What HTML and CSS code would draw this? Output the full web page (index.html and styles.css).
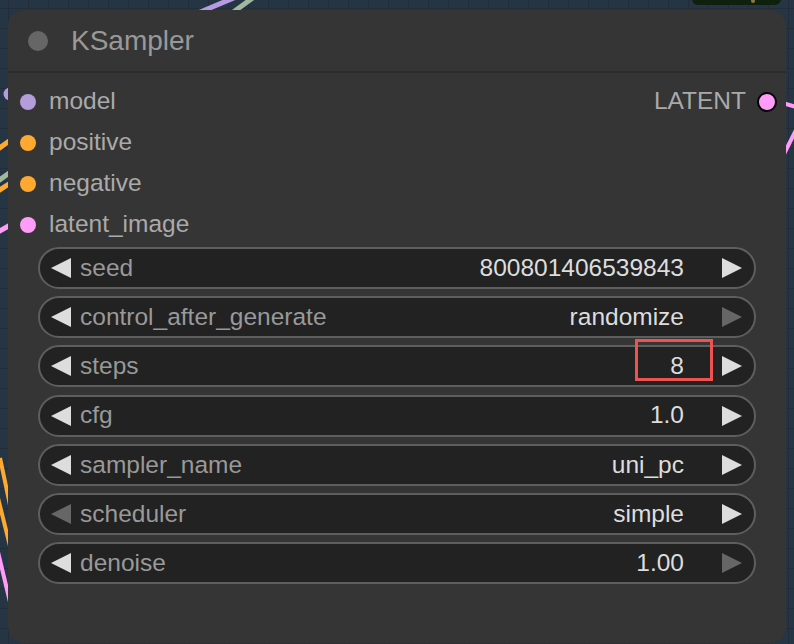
FILE: index.html
```html
<!DOCTYPE html>
<html>
<head>
<meta charset="utf-8">
<link rel="stylesheet" href="styles.css">
</head>
<body>
<div class="canvas">
  <svg class="wires" width="794" height="644" viewBox="0 0 794 644">
    <rect x="692" y="-8" width="89" height="13" rx="6" fill="#10200f"/>
    <circle cx="753" cy="1" r="2" fill="#8a7a40"/>
    <line x1="198" y1="13" x2="236" y2="-3" stroke="#b79be0" stroke-width="5"/>
    <line x1="232" y1="13" x2="254" y2="-3" stroke="#9fb89f" stroke-width="5"/>
    <circle cx="10" cy="94" r="6.5" fill="#b79be0"/>
    <line x1="-2" y1="149" x2="12" y2="139" stroke="#ffa931" stroke-width="5"/>
    <line x1="-2" y1="181" x2="12" y2="171" stroke="#9fb89f" stroke-width="5"/>
    <line x1="-2" y1="191" x2="12" y2="182" stroke="#ffa931" stroke-width="5"/>
    <line x1="-2" y1="232" x2="12" y2="224" stroke="#ff9cf9" stroke-width="5"/>
    <line x1="0" y1="458" x2="10" y2="505" stroke="#ffa931" stroke-width="4"/>
    <line x1="-2" y1="498" x2="10" y2="546" stroke="#ffa931" stroke-width="4"/>
    <line x1="-2" y1="552" x2="10" y2="602" stroke="#ff9cf9" stroke-width="4"/>
    <line x1="776" y1="101" x2="796" y2="107" stroke="#ff9cf9" stroke-width="4"/>
    <line x1="784" y1="154" x2="796" y2="130" stroke="#ff9cf9" stroke-width="4"/>
  </svg>

  <div class="node">
    <div class="title">
      <span class="title-dot"></span>
      <span class="title-text">KSampler</span>
    </div>
    <div class="body">
      <div class="slots">
        <div class="slot-row">
          <div class="in-slot"><span class="dot dot-model"></span><span class="slot-label">model</span></div>
          <div class="out-slot"><span class="slot-label">LATENT</span><span class="dot dot-out"></span></div>
        </div>
        <div class="slot-row">
          <div class="in-slot"><span class="dot dot-cond"></span><span class="slot-label">positive</span></div>
        </div>
        <div class="slot-row">
          <div class="in-slot"><span class="dot dot-cond"></span><span class="slot-label">negative</span></div>
        </div>
        <div class="slot-row">
          <div class="in-slot"><span class="dot dot-latent"></span><span class="slot-label">latent_image</span></div>
        </div>
      </div>

      <div class="widgets">
        <div class="widget">
          <svg class="arrow" viewBox="0 0 20 20"><polygon points="20,0 20,20 0,10"/></svg>
          <span class="w-label">seed</span>
          <span class="w-value">800801406539843</span>
          <svg class="arrow arrow-r" viewBox="0 0 20 20"><polygon points="0,0 0,20 20,10"/></svg>
        </div>
        <div class="widget">
          <svg class="arrow" viewBox="0 0 20 20"><polygon points="20,0 20,20 0,10"/></svg>
          <span class="w-label">control_after_generate</span>
          <span class="w-value">randomize</span>
          <svg class="arrow arrow-r disabled" viewBox="0 0 20 20"><polygon points="0,0 0,20 20,10"/></svg>
        </div>
        <div class="widget">
          <svg class="arrow" viewBox="0 0 20 20"><polygon points="20,0 20,20 0,10"/></svg>
          <span class="w-label">steps</span>
          <span class="w-value">8</span>
          <svg class="arrow arrow-r" viewBox="0 0 20 20"><polygon points="0,0 0,20 20,10"/></svg>
          <span class="highlight"></span>
        </div>
        <div class="widget">
          <svg class="arrow" viewBox="0 0 20 20"><polygon points="20,0 20,20 0,10"/></svg>
          <span class="w-label">cfg</span>
          <span class="w-value">1.0</span>
          <svg class="arrow arrow-r" viewBox="0 0 20 20"><polygon points="0,0 0,20 20,10"/></svg>
        </div>
        <div class="widget">
          <svg class="arrow" viewBox="0 0 20 20"><polygon points="20,0 20,20 0,10"/></svg>
          <span class="w-label">sampler_name</span>
          <span class="w-value">uni_pc</span>
          <svg class="arrow arrow-r" viewBox="0 0 20 20"><polygon points="0,0 0,20 20,10"/></svg>
        </div>
        <div class="widget">
          <svg class="arrow disabled" viewBox="0 0 20 20"><polygon points="20,0 20,20 0,10"/></svg>
          <span class="w-label">scheduler</span>
          <span class="w-value">simple</span>
          <svg class="arrow arrow-r" viewBox="0 0 20 20"><polygon points="0,0 0,20 20,10"/></svg>
        </div>
        <div class="widget">
          <svg class="arrow" viewBox="0 0 20 20"><polygon points="20,0 20,20 0,10"/></svg>
          <span class="w-label">denoise</span>
          <span class="w-value">1.00</span>
          <svg class="arrow arrow-r disabled" viewBox="0 0 20 20"><polygon points="0,0 0,20 20,10"/></svg>
        </div>
      </div>
    </div>
  </div>
</div>
</body>
</html>
```

FILE: styles.css
```css
* { box-sizing: border-box; }

html, body {
  margin: 0;
  padding: 0;
}

body {
  width: 794px;
  height: 644px;
  overflow: hidden;
  font-family: "Liberation Sans", Arial, sans-serif;
  background-color: #263543;
  background-image:
    linear-gradient(to right, #212e3a 1px, transparent 1px),
    linear-gradient(to bottom, #212e3a 1px, transparent 1px);
  background-size: 20px 20px;
  background-position: 8px 8px;
}

.canvas {
  position: relative;
  width: 794px;
  height: 644px;
  padding: 10px 0 0 8px;
}

.wires {
  position: absolute;
  left: 0;
  top: 0;
  z-index: 0;
}

.node {
  position: relative;
  z-index: 1;
  width: 778px;
  height: 633px;
  background: #353535;
  border-radius: 16px;
}

.title {
  height: 63px;
  display: flex;
  align-items: center;
  padding-left: 20px;
  border-bottom: 2px solid #2c2c2c;
}

.title-dot {
  width: 20px;
  height: 20px;
  border-radius: 50%;
  background: #666;
}

.title-text {
  margin-left: 23px;
  font-size: 28px;
  color: #999;
  line-height: 1;
}

.slots {
  padding-top: 8px;
}

.slot-row {
  height: 41px;
  display: flex;
  align-items: center;
  justify-content: space-between;
}

.in-slot {
  display: flex;
  align-items: center;
  padding-left: 12px;
}

.out-slot {
  display: flex;
  align-items: center;
  padding-right: 9px;
}

.dot {
  width: 16px;
  height: 16px;
  border-radius: 50%;
  flex: none;
}

.in-slot .slot-label { margin-left: 13px; }
.out-slot .slot-label { margin-right: 11px; }

.slot-label {
  font-size: 24.5px;
  color: #aaa;
  line-height: 1;
}

.dot-model { background: #b39ddb; }
.dot-cond { background: #ffa931; }
.dot-latent { background: #ff9cf9; }
.dot-out {
  width: 20px;
  height: 20px;
  background: #ff9cf9;
  border: 2px solid #000;
}

.widgets {
  margin-top: 2px;
  padding: 0 30px;
  display: flex;
  flex-direction: column;
  gap: 7.2px;
}

.widget {
  position: relative;
  height: 42px;
  border: 2px solid #5e5e5e;
  border-radius: 21px;
  background: #222;
  display: flex;
  align-items: center;
  padding: 0 12px 0 11px;
}

.arrow {
  width: 20px;
  height: 20px;
  flex: none;
  fill: #ddd;
}

.arrow.disabled { fill: #666; }

.w-label {
  margin-left: 9px;
  font-size: 24.5px;
  color: #999;
  line-height: 1;
}

.w-value {
  margin-left: auto;
  margin-right: 38px;
  font-size: 24.5px;
  color: #ddd;
  line-height: 1;
}

.highlight {
  position: absolute;
  left: 595px;
  top: -8px;
  width: 78px;
  height: 42px;
  border: 3px solid #f05252;
}
```
